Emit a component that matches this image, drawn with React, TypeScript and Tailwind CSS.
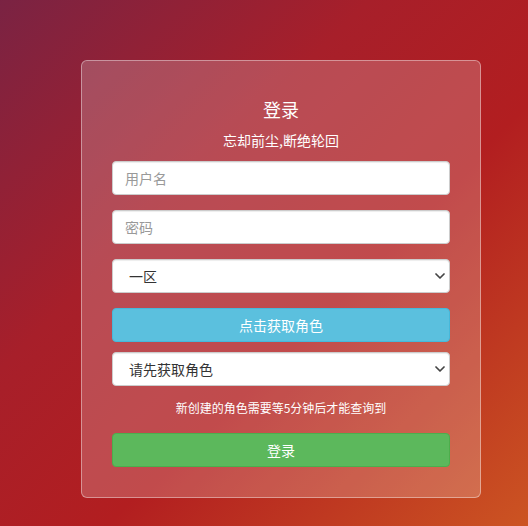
import React from "react";

const cn = "font-['Noto_Sans_CJK_SC','Noto_Sans',sans-serif]";

function Chevron() {
  return (
    <svg
      width="10"
      height="6"
      viewBox="0 0 10 6"
      className="pointer-events-none absolute right-[5px] top-1/2 -translate-y-1/2"
    >
      <polyline points="1,1 5,5 9,1" fill="none" stroke="#444" strokeWidth="1.7" strokeLinecap="round" strokeLinejoin="round" />
    </svg>
  );
}

function Select({ options }: { options: string[] }) {
  return (
    <div className="relative">
      <select className="block h-[34px] w-full appearance-none rounded-[4px] border border-[#ccc] bg-white pl-[16px] pr-6 text-[14px] text-[#333] shadow-[inset_0_1px_1px_rgba(0,0,0,0.075)] outline-none">
        {options.map(o => (
          <option key={o}>{o}</option>
        ))}
      </select>
      <Chevron />
    </div>
  );
}

export default function App() {
  return (
    <div
      className={`${cn} h-[526px] w-full overflow-hidden bg-[linear-gradient(135deg,#7a2343_0%,#a71f2a_35%,#b21e20_60%,#cc5422_100%)] pt-[60px] pl-[81px]`}
    >
      <div className="flex h-[438px] w-[400px] flex-col rounded-[6px] border border-white/40 bg-white/20 px-[30px] pt-[38px]">
        <h1 className="text-center text-[18px] leading-[20px] text-white">登录</h1>
        <p className="mt-[11px] text-center text-[14px] leading-[20px] text-white">忘却前尘,断绝轮回</p>

        <input
          placeholder="用户名"
          className="mt-[11px] h-[34px] w-full rounded-[4px] border border-[#ccc] bg-white px-[12px] text-[14px] text-[#555] shadow-[inset_0_1px_1px_rgba(0,0,0,0.075)] outline-none placeholder:text-[#999]"
        />
        <input
          type="text"
          placeholder="密码"
          className="mt-[15px] h-[34px] w-full rounded-[4px] border border-[#ccc] bg-white px-[12px] text-[14px] text-[#555] shadow-[inset_0_1px_1px_rgba(0,0,0,0.075)] outline-none placeholder:text-[#999]"
        />

        <div className="mt-[15px]">
          <Select options={["一区"]} />
        </div>

        <button className="mt-[15px] h-[34px] w-full rounded-[4px] border border-[#46b8da] bg-[#5bc0de] text-[14px] text-white">
          点击获取角色
        </button>

        <div className="mt-[10px]">
          <Select options={["请先获取角色"]} />
        </div>

        <p className="mt-[12px] text-center text-[12px] leading-[20px] text-white">新创建的角色需要等5分钟后才能查询到</p>

        <button className="mt-[15px] h-[34px] w-full rounded-[4px] border border-[#4cae4c] bg-[#5cb85c] text-[14px] text-white">
          登录
        </button>
      </div>
    </div>
  );
}
